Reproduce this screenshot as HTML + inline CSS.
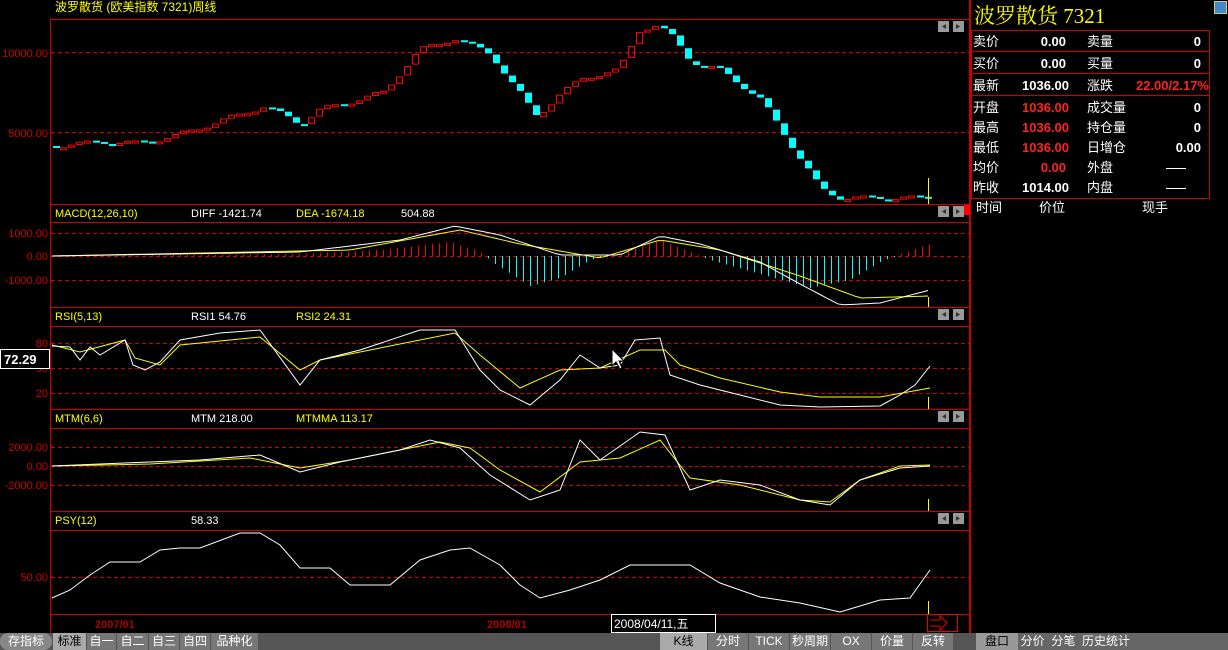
<!DOCTYPE html>
<html><head><meta charset="utf-8"><style>
body{margin:0;width:1228px;height:650px;background:#000;overflow:hidden;font-family:"Liberation Sans","Noto Sans CJK SC",sans-serif;}
svg text{font-family:"Liberation Sans","Noto Sans CJK SC",sans-serif;}
.tb{position:absolute;top:633px;height:17px;font-size:12px;line-height:17px;text-align:center;color:#fff}
</style></head><body>
<svg id="s" width="1228" height="650" style="position:absolute;left:0;top:0">
<g id="static" stroke-width="1" fill="none">
<text x="55" y="11" fill="#ff0" stroke="none" font-size="12">波罗散货 (欧美指数 7321)周线</text>
<line x1="50.5" y1="19" x2="50.5" y2="633" stroke="#c00"/>
<line x1="970" y1="0" x2="970" y2="633" stroke="#c00" stroke-width="2"/>
<line x1="50" y1="19.5" x2="970" y2="19.5" stroke="#c00"/>
<g stroke="#c00">
<line x1="50" y1="204.5" x2="970" y2="204.5"/><line x1="50" y1="222.5" x2="970" y2="222.5"/>
<line x1="50" y1="307.5" x2="970" y2="307.5"/><line x1="50" y1="326.5" x2="970" y2="326.5"/>
<line x1="50" y1="409.5" x2="970" y2="409.5"/><line x1="50" y1="428.5" x2="970" y2="428.5"/>
<line x1="50" y1="511.5" x2="970" y2="511.5"/><line x1="50" y1="530.5" x2="970" y2="530.5"/>
<line x1="50" y1="614.5" x2="970" y2="614.5"/>
</g>
<g stroke="#c00" stroke-dasharray="4,3">
<line x1="51" y1="52.5" x2="969" y2="52.5"/><line x1="51" y1="132.5" x2="969" y2="132.5"/>
<line x1="51" y1="233.5" x2="969" y2="233.5"/><line x1="51" y1="256.5" x2="969" y2="256.5"/><line x1="51" y1="280.5" x2="969" y2="280.5"/>
<line x1="51" y1="343.5" x2="969" y2="343.5"/><line x1="51" y1="368.5" x2="969" y2="368.5"/><line x1="51" y1="393.5" x2="969" y2="393.5"/>
<line x1="51" y1="447.5" x2="969" y2="447.5"/><line x1="51" y1="466.5" x2="969" y2="466.5"/><line x1="51" y1="485.5" x2="969" y2="485.5"/>
<line x1="51" y1="577.5" x2="969" y2="577.5"/>
</g>
<g fill="#c00" stroke="none" font-size="11" text-anchor="end">
<text x="48" y="57">10000.00</text><text x="48" y="137">5000.00</text>
<text x="48" y="237">1000.00</text><text x="48" y="260">0.00</text><text x="48" y="284">-1000.00</text>
<text x="48" y="347">80</text><text x="48" y="372">50</text><text x="48" y="397">20</text>
<text x="48" y="451">2000.00</text><text x="48" y="470">0.00</text><text x="48" y="489">-2000.00</text>
<text x="48" y="581">50.00</text>
</g>
<g stroke="none" font-size="11">
<text x="55" y="217" fill="#ff0">MACD(12,26,10)</text><text x="191" y="217" fill="#fff">DIFF  -1421.74</text><text x="296" y="217" fill="#ff0">DEA  -1674.18</text><text x="401" y="217" fill="#fff">504.88</text>
<text x="55" y="320" fill="#ff0">RSI(5,13)</text><text x="191" y="320" fill="#fff">RSI1  54.76</text><text x="296" y="320" fill="#ff0">RSI2  24.31</text>
<text x="55" y="422" fill="#ff0">MTM(6,6)</text><text x="191" y="422" fill="#fff">MTM  218.00</text><text x="296" y="422" fill="#ff0">MTMMA  113.17</text>
<text x="55" y="524" fill="#ff0">PSY(12)</text><text x="191" y="524" fill="#fff">58.33</text>
<text x="95" y="628" fill="#a00" font-weight="bold">2007/01</text><text x="487" y="628" fill="#a00" font-weight="bold">2008/01</text>
</g>
<rect x="0.5" y="349.5" width="49" height="19" fill="#000" stroke="#fff"/>
<text x="4" y="364" fill="#fff" stroke="none" font-size="13" font-weight="bold">72.29</text>
<rect x="611.5" y="614.5" width="104" height="18" fill="#000" stroke="#fff"/>
<text x="614" y="628" fill="#fff" stroke="none" font-size="12">2008/04/11,五</text>
<rect x="927.5" y="614.5" width="30" height="17" stroke="#e00"/><path d="M930 620h10v-4l7 7-7 7v-4h-10" stroke="#e00"/>
</g>
<g id="dyn"></g>
<path d="M612 349 L612 366 L616 362 L620 369 L622 368 L619 361 L624 361 Z" fill="#fff" stroke="#000"/>
<text x="974" y="23" fill="#ff0" font-size="21" style="font-family:'Liberation Serif','Noto Serif CJK SC',serif">波罗散货 7321</text>
<rect x="1214.5" y="1.5" width="12" height="12" fill="#48c" stroke="#cc8"/>
<g stroke="#c00" fill="none"><rect x="971.5" y="30.5" width="238" height="168"/>
<line x1="972" y1="51.5" x2="1210" y2="51.5"/><line x1="972" y1="73.5" x2="1210" y2="73.5"/><line x1="972" y1="95.5" x2="1210" y2="95.5"/></g>
<g font-size="13" fill="#fff">
<text x="973" y="46">卖价</text><text x="1066" y="46" text-anchor="end" font-weight="bold">0.00</text><text x="1087" y="46">卖量</text><text x="1201" y="46" text-anchor="end" font-weight="bold">0</text>
<text x="973" y="68">买价</text><text x="1066" y="68" text-anchor="end" font-weight="bold">0.00</text><text x="1087" y="68">买量</text><text x="1201" y="68" text-anchor="end" font-weight="bold">0</text>
<text x="973" y="90">最新</text><text x="1069" y="90" text-anchor="end" font-weight="bold">1036.00</text><text x="1087" y="90">涨跌</text><text x="1209" y="90" text-anchor="end" font-weight="bold" fill="#f22">22.00/2.17%</text>
<text x="973" y="112">开盘</text><text x="1069" y="112" text-anchor="end" font-weight="bold" fill="#f22">1036.00</text><text x="1087" y="112">成交量</text><text x="1201" y="112" text-anchor="end" font-weight="bold">0</text>
<text x="973" y="132">最高</text><text x="1069" y="132" text-anchor="end" font-weight="bold" fill="#f22">1036.00</text><text x="1087" y="132">持仓量</text><text x="1201" y="132" text-anchor="end" font-weight="bold">0</text>
<text x="973" y="152">最低</text><text x="1069" y="152" text-anchor="end" font-weight="bold" fill="#f22">1036.00</text><text x="1087" y="152">日增仓</text><text x="1201" y="152" text-anchor="end" font-weight="bold">0.00</text>
<text x="973" y="172">均价</text><text x="1066" y="172" text-anchor="end" font-weight="bold" fill="#f22">0.00</text><text x="1087" y="172">外盘</text>
<text x="973" y="192">昨收</text><text x="1069" y="192" text-anchor="end" font-weight="bold">1014.00</text><text x="1087" y="192">内盘</text>
<text x="976" y="212">时间</text><text x="1039" y="212">价位</text><text x="1142" y="212">现手</text>
</g>
<line x1="1166" y1="168.5" x2="1186" y2="168.5" stroke="#fff"/><line x1="1166" y1="188.5" x2="1186" y2="188.5" stroke="#fff"/>
</svg>
<div style="position:absolute;left:0;top:633px;width:1228px;height:17px;background:#555"></div>
<div class="tb" style="left:0;width:52px;background:#888;border-radius:8px">存指标</div>
<div class="tb" style="left:53px;width:33px;background:#aaa;color:#000">标准</div>
<div class="tb" style="left:87px;width:29px;background:#777">自一</div>
<div class="tb" style="left:117px;width:31px;background:#777">自二</div>
<div class="tb" style="left:149px;width:30px;background:#777">自三</div>
<div class="tb" style="left:180px;width:30px;background:#777">自四</div>
<div class="tb" style="left:211px;width:47px;background:#777">品种化</div>
<div class="tb" style="left:660px;width:47px;background:#aaa;color:#000">K线</div>
<div class="tb" style="left:708px;width:40px;background:#777">分时</div>
<div class="tb" style="left:749px;width:40px;background:#777">TICK</div>
<div class="tb" style="left:790px;width:40px;background:#777">秒周期</div>
<div class="tb" style="left:831px;width:40px;background:#777">OX</div>
<div class="tb" style="left:872px;width:40px;background:#777">价量</div>
<div class="tb" style="left:913px;width:40px;background:#777">反转</div>
<div class="tb" style="left:980px;width:248px;background:#666;text-align:left;color:#fff">&nbsp;&nbsp;&nbsp;盘口 &nbsp;分价 &nbsp;分笔 &nbsp;历史统计</div>
<div class="tb" style="left:976px;width:42px;background:#999;color:#000">盘口</div>
<script>
(function(){
var NS="http://www.w3.org/2000/svg",g=document.getElementById('dyn');
function el(t,a){var e=document.createElementNS(NS,t);for(var k in a)e.setAttribute(k,a[k]);g.appendChild(e);return e;}
function interp(p,x){for(var i=0;i<p.length-1;i++){if(x>=p[i][0]&&x<=p[i+1][0]){var t=(x-p[i][0])/(p[i+1][0]-p[i][0]);return p[i][1]+t*(p[i+1][1]-p[i][1]);}}return p[p.length-1][1];}
function line(p,c){el('polyline',{points:p.map(function(q){return q.join(',')}).join(' '),fill:'none',stroke:c});}
var P=[[52,146],[100,142],[140,143],[175,136],[230,118],[265,106],[300,125],[320,110],[385,92],[420,50],[455,38],[490,55],[520,95],[535,118],[560,95],[585,77],[620,70],[640,30],[655,25],[670,35],[690,62],[720,70],[760,100],[790,145],[820,190],[840,198],[930,198]];
var prev=interp(P,52);
for(var x=56;x<=930;x+=8){var v=interp(P,x)+Math.sin(x*1.7)*2.5;var tp=Math.min(v,prev),h=Math.max(2,Math.abs(v-prev)*0.8);
 if(v<prev)el('rect',{x:x-3.5,y:tp+0.5,width:6,height:h,fill:'none',stroke:'#f00'});else el('rect',{x:x-3,y:tp,width:7,height:h,fill:'#0ff'});prev=v;}
var H=[[52,0],[300,2],[380,6],[450,14],[480,4],[495,-8],[530,-30],[560,-22],[590,-4],[620,2],[660,16],[690,4],[710,-4],[760,-18],[810,-32],[850,-24],[880,-6],[900,2],[930,12]];
for(var x=54;x<=930;x+=7){var d=interp(H,x);if(Math.abs(d)<0.5)d=d<0?-1:1;el('line',{x1:x+.5,y1:256,x2:x+.5,y2:256-d,stroke:d>0?'#f00':'#0ff'});}
var D=[[52,256],[300,252],[400,240],[455,226],[500,235],[560,255],[620,255],[660,236],[700,244],[760,262],[800,284],[840,305],[880,303],[930,290]];
var E=[[52,256],[350,250],[460,230],[520,244],[600,258],[660,240],[720,250],[800,276],[860,298],[930,296]];
function sm(p){var r=[];for(var x=52;x<=930;x+=6)r.push([x,interp(p,x)]);return r;}
line(sm(E),'#ff0');line(sm(D),'#fff');
line([[52,345],[80,352],[125,340],[135,358],[160,365],[180,345],[260,337],[300,370],[320,360],[455,333],[480,355],[520,388],[560,370],[600,368],[640,350],[665,350],[680,365],[720,378],[780,392],[820,397],[880,397],[930,388]],'#ff0');
line([[52,346],[70,347],[80,360],[90,347],[100,355],[125,340],[133,365],[145,370],[160,362],[180,340],[220,333],[260,330],[300,385],[320,360],[360,350],[420,330],[455,330],[480,370],[500,390],[530,405],[560,380],[580,355],[600,368],[620,365],[635,340],[660,338],[670,375],[700,385],[740,395],[780,405],[820,407],[880,406],[900,395],[915,385],[930,366]],'#fff');
line([[52,466],[150,464],[250,458],[300,468],[350,460],[440,442],[470,448],[500,470],[540,492],[580,462],[620,458],[660,440],[690,478],[740,485],[800,500],[830,502],[860,480],[900,466],[930,465]],'#ff0');
line([[52,466],[100,464],[150,462],[200,460],[260,455],[300,472],[340,462],[400,450],[430,440],[460,448],[490,475],[530,500],[560,490],[580,440],[600,460],[640,432],[665,435],[690,490],[720,480],[760,485],[800,500],[830,505],[860,480],[900,468],[930,466]],'#fff');
line([[52,598],[70,590],[90,575],[110,562],[140,562],[160,550],[180,548],[200,548],[240,533],[260,533],[280,545],[300,568],[330,568],[350,585],[390,585],[420,560],[450,550],[470,548],[500,565],[520,585],[540,598],[570,590],[600,580],[630,565],[660,565],[690,565],[720,583],[760,597],[800,603],[840,612],[880,600],[910,598],[930,570]],'#fff');
[[178,204],[297,307],[397,409],[499,511],[601,614]].forEach(function(r){el('line',{x1:928.5,y1:r[0],x2:928.5,y2:r[1],stroke:'#ff0'});});
[19,204,307,409,511].forEach(function(y0){var y=y0+2;el('rect',{x:938,y:y,width:11,height:11,fill:'#999'});el('rect',{x:953,y:y,width:11,height:11,fill:'#999'});el('path',{d:'M946 '+(y+3)+'l-4 2.5 4 2.5z',fill:'#333'});el('path',{d:'M956 '+(y+3)+'l4 2.5-4 2.5z',fill:'#333'});});
el('rect',{x:964,y:205,width:6,height:10,fill:'#f00'});
})();
</script>
</body></html>
